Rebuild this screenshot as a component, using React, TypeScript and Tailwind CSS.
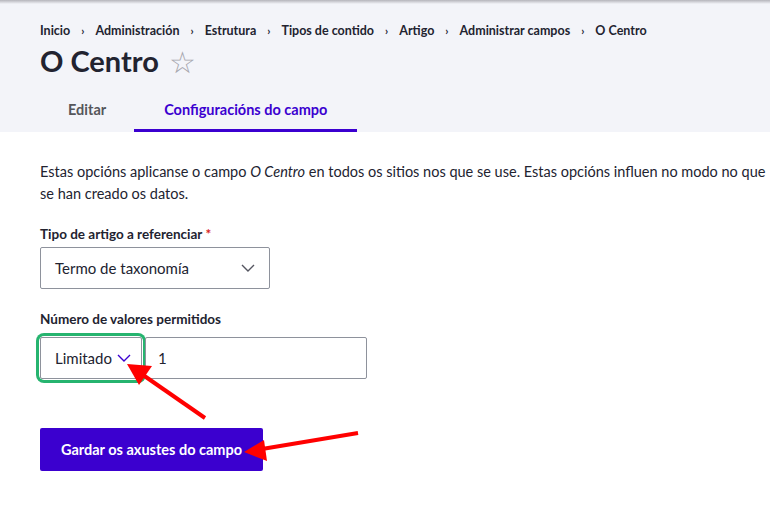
import React from "react";

const crumbs = [
  "Inicio",
  "Administración",
  "Estrutura",
  "Tipos de contido",
  "Artigo",
  "Administrar campos",
  "O Centro",
];

function Chevron({ className }: { className?: string }) {
  return (
    <svg width="14" height="8" viewBox="0 0 14 8" className={className}>
      <path d="M1 1l6 6 6-6" fill="none" stroke="currentColor" strokeWidth="1.4" />
    </svg>
  );
}

function Arrows() {
  return (
    <svg
      className="absolute inset-0 pointer-events-none"
      width="770"
      height="505"
      viewBox="0 0 770 505"
    >
      <line x1="205" y1="418" x2="143" y2="375" stroke="#f00" strokeWidth="4" />
      <polygon points="127,364 152,366 139,385" fill="#f00" />
      <line x1="358" y1="433" x2="262" y2="449" stroke="#f00" strokeWidth="4" />
      <polygon points="244,452 264,440 267,461" fill="#f00" />
    </svg>
  );
}

export default function App() {
  return (
    <div
      className="relative w-[770px] h-[505px] overflow-hidden bg-white text-[#222330]"
      style={{ fontFamily: 'Lato, "Noto Sans", sans-serif' }}
    >
      <div className="bg-[#f3f4f9]">
        <div className="h-[4px] bg-gradient-to-b from-[#b5b5bb] to-[#f3f4f9]" />
        <div className="pl-[40px] pt-[19px]">
          <nav className="flex items-center text-[12.5px] font-bold leading-[16px] text-[#222330]">
            {crumbs.map((c, i) => (
              <span key={c} className="flex items-center">
                {i > 0 && <span className="mx-[11px] text-[11px]">›</span>}
                <span>{c}</span>
              </span>
            ))}
          </nav>
          <h1 className="mt-[4px] flex items-center text-[29px] font-bold leading-[36px]">
            O Centro
            <span className="ml-[10px] text-[30px] font-normal leading-[30px] text-[#a5a5ad]">☆</span>
          </h1>
        </div>
        <div className="mt-[21px] flex pl-[40px] text-[14.5px] font-bold">
          <div className="px-[28px] pb-[9px] text-[#55565b] leading-[20px] border-b-[3px] border-transparent">
            Editar
          </div>
          <div className="px-[30px] pb-[9px] text-[#3b00d0] leading-[20px] border-b-[3px] border-[#3b00d0]">
            Configuracións do campo
          </div>
        </div>
      </div>

      <div className="pl-[40px] pt-[29px]">
        <p className="text-[14.5px] leading-[22px] text-[#222330] whitespace-nowrap">
          Estas opcións aplicanse o campo <em>O Centro</em> en todos os sitios nos que se use.
          Estas opcións influen no modo no que
          <br />
          se han creado os datos.
        </p>

        <div className="mt-[20px]">
          <div className="text-[13.5px] font-bold leading-[18px]">
            Tipo de artigo a referenciar <span className="text-[#d72222]">*</span>
          </div>
          <div className="mt-[4px] flex h-[42px] w-[230px] items-center justify-between rounded-[2px] border border-[#8e929c] pl-[14px] pr-[14px] text-[15px]">
            <span>Termo de taxonomía</span>
            <Chevron className="text-[#545560]" />
          </div>
        </div>

        <div className="mt-[21px]">
          <div className="text-[13.5px] font-bold leading-[18px]">
            Número de valores permitidos
          </div>
          <div className="mt-[9px] flex items-center">
            <div className="rounded-[4px] ring-[3px] ring-[#26b46f] ring-offset-1">
              <div className="flex h-[42px] w-[102px] items-center rounded-[2px] border border-[#8e929c] pl-[14px] text-[15px]">
                <span>Limitado</span>
                <Chevron className="ml-[5px] text-[#3b00d0]" />
              </div>
            </div>
            <div className="ml-[3px] flex h-[42px] w-[222px] items-center rounded-[2px] border border-[#8e929c] pl-[12px] text-[15px]">
              1
            </div>
          </div>
        </div>

        <button className="mt-[49px] flex h-[43px] w-[223px] items-center justify-center rounded-[2px] bg-[#3b00cf] text-[14.5px] font-bold text-white">
          Gardar os axustes do campo
        </button>
      </div>

      <Arrows />
    </div>
  );
}
